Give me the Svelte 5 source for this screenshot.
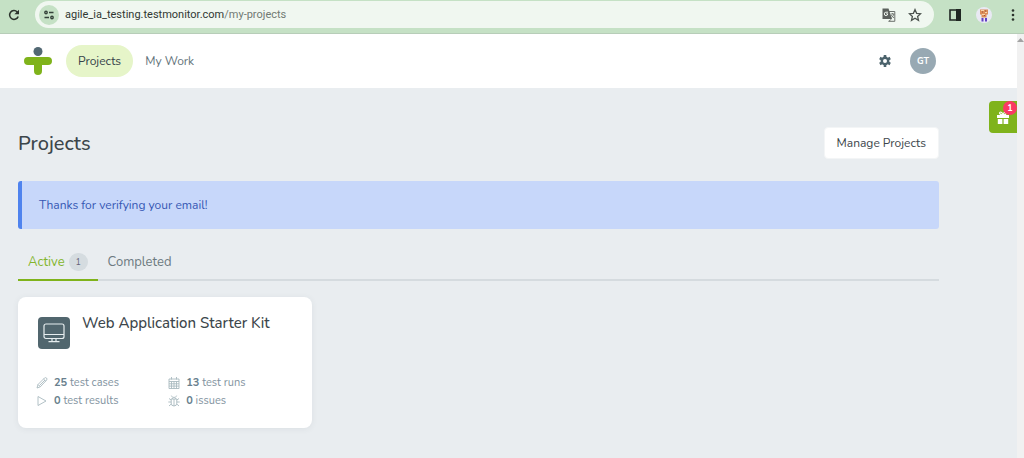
<script lang="ts">
  const tabs = [
    { name: 'Active', count: 1 },
    { name: 'Completed', count: null }
  ];
  let current = $state('Active');

  const stats = [
    { icon: 'pencil', value: 25, label: 'test cases' },
    { icon: 'calendar', value: 13, label: 'test runs' },
    { icon: 'play', value: 0, label: 'test results' },
    { icon: 'bug', value: 0, label: 'issues' }
  ];
</script>

<div class="window">
  <div class="toolbar">
    <button class="plain" aria-label="Reload">
      <svg width="12" height="12" viewBox="0 0 12 12" fill="none" stroke="#2b332c" stroke-width="1.5">
        <path d="M10.2 7.4A4.4 4.4 0 1 1 9.2 2.900L10 3.700" />
        <path d="M11 .7v4.600H6.400z" fill="#2b332c" stroke="none" />
      </svg>
    </button>
    <div class="address">
      <button class="plain site" aria-label="Site information">
        <svg width="10" height="10" viewBox="0 0 10 10" fill="none" stroke="#35423a" stroke-width="1.4">
          <circle cx="2" cy="2.500" r="1.200" />
          <path d="M5 2.500h4.500M.5 7.500H5" />
          <circle cx="8" cy="7.500" r="1.200" />
        </svg>
      </button>
      <span class="url">agile_ia_testing.testmonitor.com<span>/my-projects</span></span>
      <button class="plain" aria-label="Translate">
        <svg width="14" height="14" viewBox="0 0 14 14">
          <path d="M6 3.5h6.8v9.8H6.5" fill="#f0f7f0" stroke="#6b706c" />
          <path d="M.5.5h6L10 11H.5z" fill="#5b605c" />
          <path d="M6 4.2H3.9A1.7 1.7 0 1 0 5.7 5.8H4.2" fill="none" stroke="#f0f7f0" />
          <path d="M8.7 6h3.8M10.6 5v1M11.8 6c-.3 1.7-1.2 2.9-2.3 3.5M9.3 7c.6 1.3 1.5 2.2 2.8 2.9M6.8 13.2l2.6-2" fill="none" stroke="#6b706c" stroke-width=".9" />
        </svg>
      </button>
      <button class="plain" aria-label="Bookmark">
        <svg width="14" height="14" viewBox="0 0 14 14" fill="none" stroke="#4c534e" stroke-width="1.3">
          <path d="M7 1.600l1.600 3.700 4 .400-3 2.700.9 4L7 10.300l-3.500 2.100.9-4-3-2.700 4-.400z" />
        </svg>
      </button>
    </div>
    <button class="plain" aria-label="Side panel">
      <svg width="12" height="12" viewBox="0 0 12 12">
        <path d="M1 1h10v10H1z" fill="none" stroke="#1f2622" stroke-width="1.6" />
        <path d="M7 0h5v12H7z" fill="#1f2622" />
      </svg>
    </button>
    <button class="plain" aria-label="Profile">
      <svg width="16" height="16" viewBox="0 0 16 16">
        <circle cx="8" cy="8" r="8" fill="#e9e9f4" />
        <path d="M4 2.500h8v5H10.500v3h-5v-3H4z" fill="#dc8d58" />
        <path d="M5 3h3v1H5zM9 5h2v1H9zM6 7h3v1H6z" fill="#f8d6a8" />
        <path d="M6 4.500h1v1H6zM9 3.500h1v1H9zM8 8h1v1H8z" fill="#9c4e38" />
        <path d="M5.500 11h2v3.500h-2zM9 11h2v3.500H9z" fill="#6340c4" />
      </svg>
    </button>
    <button class="plain menu" aria-label="Menu">
      <svg width="4" height="12" viewBox="0 0 4 12" fill="#2b332c">
        <circle cx="2" cy="1.500" r="1.300" />
        <circle cx="2" cy="6" r="1.300" />
        <circle cx="2" cy="10.500" r="1.300" />
      </svg>
    </button>
  </div>

  <div class="viewport">
    <div class="page">
      <header>
        <a href="/" class="logo" aria-label="Home">
          <svg width="28" height="28" viewBox="0 0 28 28">
            <circle cx="14" cy="4.500" r="4.500" fill="#526873" />
            <path d="M4 14h20M14 14v10" fill="none" stroke="#7fb31b" stroke-width="8" stroke-linecap="round" />
          </svg>
        </a>
        <nav>
          <a href="/my-projects" class="active">Projects</a>
          <a href="/my-work">My Work</a>
        </nav>
        <button class="plain settings" aria-label="Settings">
          <svg width="12" height="12" viewBox="0 0 12 12">
            <circle cx="6" cy="6" r="3.200" fill="none" stroke="#4c636c" stroke-width="2.400" />
            <path d="M6 0v2.500M6 9.500V12M.8 3L3 4.250M9 7.750L11.200 9M.8 9L3 7.750M9 4.250L11.200 3" stroke="#4c636c" stroke-width="2.600" />
          </svg>
        </button>
        <button class="avatar">GT</button>
      </header>

      <main>
        <div class="title">
          <h1>Projects</h1>
          <button class="manage">Manage Projects</button>
        </div>

        <p class="notice">Thanks for verifying your email!</p>

        <div class="tabs" role="tablist">
          {#each tabs as tab (tab.name)}
            <button
              role="tab"
              aria-selected={current === tab.name}
              class:selected={current === tab.name}
              onclick={() => (current = tab.name)}
            >
              {tab.name}
              {#if tab.count}<span class="count">{tab.count}</span>{/if}
            </button>
          {/each}
        </div>

        <div class="cards">
          <article class="card">
            <div class="card-head">
              <span class="card-icon">
                <svg width="22" height="20" viewBox="0 0 22 20" fill="none" stroke="#e6edef" stroke-width="1.200">
                  <rect x="1" y="1" width="20" height="14.500" rx="2" />
                  <path d="M1 11.500h20M9 15.500v3M13 15.500v3M5.500 18.700h11" />
                </svg>
              </span>
              <h2>Web Application Starter Kit</h2>
            </div>
            <ul class="stats">
              {#each stats as stat (stat.icon)}
                <li>
                  <svg width="12" height="12" viewBox="0 0 12 12" fill="none" stroke="#a9bac0" stroke-width=".9">
                    {#if stat.icon === 'pencil'}
                      <path d="M1 11l1-3.500L8.500 1q1-.8 2 0 .9 1 .2 2L4.300 9.800zM7.500 2l2.400 2.300M2 7.500l2.300 2.300M3.500 8.500L9 3" />
                    {:else if stat.icon === 'calendar'}
                      <path d="M1 2h10v9.500H1zM1 4.500h10M1 6.800h10M1 9.100h10M3.500 4.500v7M6 4.500v7M8.500 4.500v7M3.500 0v2.500M8.500 0v2.500" />
                    {:else if stat.icon === 'play'}
                      <path d="M2 1.500v9L10 6z" stroke-linejoin="round" />
                    {:else}
                      <path d="M3.200 4h5.600v4.200a2.800 2.800 0 0 1-5.600 0zM4.200 4a1.800 1.800 0 0 1 3.600 0M6 4v7M4.300 2L3.400.6M7.700 2L8.600.6M3.200 5L1 3.500M8.800 5L11 3.500M3.200 7H.3M8.800 7h2.900M3.200 9L1 11M8.800 9L11 11" />
                    {/if}
                  </svg>
                  <span><strong>{stat.value}</strong> {stat.label}</span>
                </li>
              {/each}
            </ul>
          </article>
        </div>
      </main>

      <button class="gift" aria-label="What's new">
        <svg width="12" height="13" viewBox="0 0 12 13" fill="#fff">
          <path d="M0 4h12v3H0zM.8 8h4.600v5H.8zM6.600 8h4.600v5H6.600z" />
          <path d="M6 4C2 4 2 1 3.700 1 5 1 6 4 6 4s1-3 2.300-3C10 1 10 4 6 4z" fill="none" stroke="#fff" stroke-width="1.200" />
        </svg>
        <span class="badge">1</span>
      </button>
    </div>
    <div class="scrollbar">
      <svg width="7" height="4" viewBox="0 0 7 4"><path d="M0 4l3.500-4L7 4z" fill="#a3a3a3" /></svg>
    </div>
  </div>
</div>

<style>
  :global(body) {
    margin: 0;
    background: #e9edf0;
  }
  .window {
    min-height: 100vh;
    display: flex;
    flex-direction: column;
    font-family: Nunito, Lato, sans-serif;
    font-size: 12px;
    color: #3c464b;
  }
  button {
    font: inherit;
    color: inherit;
    cursor: pointer;
  }
  .plain {
    display: flex;
    align-items: center;
    justify-content: center;
    padding: 0;
    border: 0;
    background: none;
  }
  .toolbar {
    display: flex;
    align-items: center;
    gap: 15px;
    height: 34px;
    box-sizing: border-box;
    padding: 0 9px 4px 8px;
    background: #c5e1c5;
    border-bottom: 1px solid #b7cdb8;
  }
  .address {
    flex: 1;
    display: flex;
    align-items: center;
    gap: 12px;
    height: 27px;
    padding: 0 12px 0 4px;
    border-radius: 14px;
    background: #f0f7f0;
  }
  .site {
    width: 20px;
    height: 20px;
    border-radius: 50%;
    background: #c5e1c5;
  }
  .url {
    flex: 1;
    margin-left: -6px;
    font-family: "Segoe UI", Roboto, sans-serif;
    font-size: 11px;
    color: #303833;
  }
  .url span {
    color: #707a73;
  }
  .menu {
    margin-left: 4px;
  }
  .viewport {
    flex: 1;
    display: flex;
  }
  .page {
    position: relative;
    flex: 1;
    background: #e9edf0;
  }
  .scrollbar {
    width: 7px;
    padding-top: 4px;
    background: #f1f1f1;
    line-height: 0;
  }
  header {
    display: flex;
    align-items: center;
    height: 54px;
    padding: 0 81px 0 24px;
    background: #fff;
  }
  .logo {
    display: flex;
    margin-right: 14px;
  }
  nav {
    flex: 1;
    display: flex;
  }
  nav a {
    padding: 0 12px;
    border-radius: 16px;
    line-height: 32px;
    color: #65757c;
    text-decoration: none;
  }
  nav a.active {
    background: #e6f5c9;
    color: #36434a;
  }
  .settings {
    margin-right: 19px;
  }
  .avatar {
    width: 26px;
    height: 26px;
    padding: 0;
    border: 0;
    border-radius: 50%;
    background: #98a9b3;
    color: #fff;
    font-size: 9px;
    font-weight: 700;
  }
  main {
    padding: 39px 78px 29px 18px;
  }
  .title {
    display: flex;
    align-items: center;
    justify-content: space-between;
    margin-bottom: 22px;
  }
  h1 {
    margin: 0;
    font-size: 20px;
    font-weight: 500;
  }
  .manage {
    height: 32px;
    padding: 0 12px;
    border: 1px solid #f3f5f6;
    border-radius: 4px;
    background: #fff;
  }
  .notice {
    margin: 0 0 16px;
    padding: 0 17px;
    border-left: 4px solid #4f83ee;
    border-radius: 3px;
    background: #c7d7fa;
    color: #3658b4;
    line-height: 48px;
  }
  .tabs {
    display: flex;
    border-bottom: 2px solid #d5dbdf;
  }
  .tabs button {
    display: flex;
    align-items: center;
    gap: 4px;
    height: 36px;
    margin-bottom: -2px;
    padding: 0 10px;
    border: 0;
    border-bottom: 2px solid transparent;
    background: none;
    color: #6c7a80;
    font-size: 13px;
  }
  .tabs .selected {
    border-color: #7fb31b;
    color: #83b52c;
  }
  .count {
    min-width: 19px;
    border-radius: 9px;
    background: #d5dce0;
    color: #66647a;
    font-size: 9px;
    line-height: 18px;
    text-align: center;
  }
  .cards {
    display: grid;
    grid-template-columns: repeat(3, 1fr);
    gap: 19px;
    padding-top: 16px;
  }
  .card {
    padding: 16px 12px 18px 18px;
    border-radius: 8px;
    background: #fff;
    box-shadow: 0 1px 6px rgba(60, 80, 90, 0.08);
  }
  .card-head {
    display: flex;
    gap: 12px;
  }
  .card-icon {
    display: flex;
    align-items: center;
    justify-content: center;
    width: 32px;
    height: 32px;
    margin: 4px 0 0 2px;
    border-radius: 4px;
    background: #51666e;
  }
  h2 {
    margin: 0;
    font-size: 15px;
    font-weight: 500;
    line-height: 20px;
  }
  .stats {
    display: grid;
    grid-template-columns: 1fr 1fr;
    margin: 25px 0 0;
    padding: 0;
    list-style: none;
    color: #8293a0;
    font-size: 11px;
    line-height: 18px;
  }
  .stats li {
    display: flex;
    align-items: center;
    gap: 6px;
  }
  strong {
    color: #687f8d;
  }
  .gift {
    position: absolute;
    top: 67px;
    right: 0;
    display: flex;
    align-items: center;
    width: 28px;
    height: 32px;
    padding: 0 8px;
    border: 0;
    border-radius: 4px 0 0 4px;
    background: #7fb31b;
  }
  .badge {
    position: absolute;
    top: 0;
    right: 0;
    width: 14px;
    border-radius: 50%;
    background: #fa3864;
    color: #fff;
    font-size: 9px;
    font-weight: 700;
    line-height: 14px;
  }
</style>
